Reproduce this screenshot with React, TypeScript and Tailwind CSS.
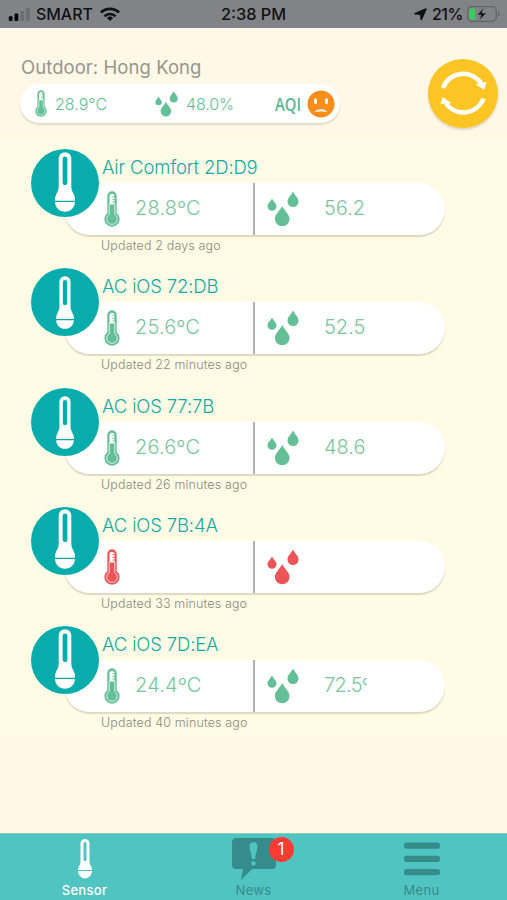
import React from 'react';

interface Sensor {
  name: string;
  temperature?: string;
  humidity?: string;
  updated: string;
  offline?: boolean;
  small?: boolean;
}

const sensors: Sensor[] = [
  { name: 'Air Comfort 2D:D9', temperature: '28.8ºC', humidity: '56.2', updated: 'Updated 2 days ago' },
  { name: 'AC iOS 72:DB', temperature: '25.6ºC', humidity: '52.5', updated: 'Updated 22 minutes ago', small: true },
  { name: 'AC iOS 77:7B', temperature: '26.6ºC', humidity: '48.6', updated: 'Updated 26 minutes ago', small: true },
  { name: 'AC iOS 7B:4A', updated: 'Updated 33 minutes ago', offline: true },
  { name: 'AC iOS 7D:EA', temperature: '24.4ºC', humidity: '72.5º', updated: 'Updated 40 minutes ago' },
];

function Thermometer({ className }: { className: string }) {
  return (
    <svg viewBox="0 0 16 36" className={className} fill="none">
      <path d="M3.3 5a4.7 4.7 0 0 1 9.4 0v17.2a7.600 7.600 0 1 1-9.400 0Z" fill="currentColor" />
      <path
        d="M5.200 13v10.600a5.300 5.300 0 1 0 5.600 0V13"
        stroke="white"
        strokeWidth="0.900"
        strokeOpacity="0.850"
      />
      <path d="M5.500 5.200a2.500 2.500 0 0 1 5 0V13.500h-5Z" fill="white" />
      <path d="M8.300 5.800h2.500M8.300 8.400h2.500M8.300 11h2.500" stroke="currentColor" strokeWidth="0.900" />
    </svg>
  );
}

function Drops({ className }: { className: string }) {
  return (
    <svg viewBox="0 0 32 36" className={className} fill="currentColor">
      <path d="M26 0.5c1.5 3.4 5.5 6.3 5.5 10a5.5 5.5 0 0 1-11 0c0-3.7 4-6.6 5.5-10Z" />
      <path d="M5 7.5c1.2 2.8 4.5 5 4.5 7.8a4.5 4.5 0 0 1-9 0c0-2.8 3.3-5 4.5-7.8Z" />
      <path d="M15.2 15c2 4.6 7.3 8.2 7.3 13a7.3 7.3 0 0 1-14.6 0c0-4.8 5.3-8.4 7.3-13Z" />
    </svg>
  );
}

function SensorIcon({ className }: { className: string }) {
  return (
    <svg viewBox="0 0 20 60" className={className}>
      <path
        d="M3.7 6.5a6.3 6.3 0 0 1 12.6 0v28.500c0 4 2.500 6.500 3.500 10.200.200 1 .200 2.400.200 3.600H0c0-1.200 0-2.600.200-3.600C1.200 41.500 3.700 39 3.700 35ZM0 50h20c-.2 5.600-4.500 9.800-10 9.800S.2 55.600 0 50Z"
        fill="white"
      />
      <path d="M7.600 6.800a2.400 2.400 0 0 1 4.800 0v24a2.400 2.400 0 0 1-4.800 0Z" className="fill-[#08adab]" />
    </svg>
  );
}

function StatusBar() {
  return (
    <header className="flex h-[28px] shrink-0 items-center bg-[#828387] pl-2 font-medium text-[#111]">
      <svg viewBox="0 0 23 14" className="h-[13px] w-[23px]">
        <rect x="0" y="9" width="4" height="5" rx="1" />
        <rect x="6.200" y="6" width="4" height="8" rx="1" />
        <rect x="12.500" y="3" width="4" height="11" rx="1" fill="#6d6e71" />
        <rect x="18.500" y="0" width="4" height="14" rx="1" fill="#6d6e71" />
      </svg>
      <span className="ml-[5px] w-[57px] text-[16px] tracking-[-0.050px] whitespace-nowrap">SMART</span>
      <svg viewBox="0 0 20 14" className="ml-[7px] h-[14px] w-[20px]" fill="none">
        <path d="M1 5.500a13 13 0 0 1 18 0" stroke="#111" strokeWidth="2.900" />
        <path d="M4.500 9.200a8 8 0 0 1 11 0" stroke="#111" strokeWidth="2.700" />
        <path d="M10 14 6.900 10.900a4.500 4.500 0 0 1 6.200 0Z" fill="#111" />
      </svg>
      <span className="ml-[101px] w-[66px] text-[16.300px] whitespace-nowrap">2:38 PM</span>
      <svg viewBox="0 0 13 13" className="mt-px ml-[127px] h-[13px] w-[13px]">
        <path d="M12 1 7.300 11.500 6.700 6.300 1 5.800Z" fill="#111" stroke="#111" strokeWidth="1.600" strokeLinejoin="round" />
      </svg>
      <span className="ml-[5px] w-[32px] text-[16px] tracking-[-0.500px] whitespace-nowrap">21%</span>
      <svg viewBox="0 0 33 16" className="ml-[3px] h-[16px] w-[33px]" fill="none">
        <rect x="0.700" y="0.700" width="28.600" height="14.600" rx="4" stroke="#626367" strokeWidth="1.200" />
        <path d="M4.500 2.500H8v11H4.500a2 2 0 0 1-2-2v-7a2 2 0 0 1 2-2Z" fill="#30d158" />
        <path d="M31 5.500v5c2-.7 2-4.300 0-5Z" fill="#626367" />
        <path d="m17 1.500-7 7.500h4l-2 5.500L19.500 7H15Z" fill="#111" stroke="#828387" strokeWidth="0.700" />
      </svg>
    </header>
  );
}

function Outdoor() {
  return (
    <section className="flex h-[111px] shrink-0 bg-[#fff8e6] pl-5">
      <div className="w-[320px] pt-[26px]">
        <h1 className="pl-px text-[18.500px] leading-[26px] tracking-[0.060px] whitespace-nowrap text-[#96958d]">
          Outdoor: Hong Kong
        </h1>
        <div className="mt-[4px] flex h-[39px] items-center rounded-full bg-white pl-[15px] text-[#62c095] shadow-[0_2px_2px_rgba(120,110,80,0.220)]">
          <Thermometer className="h-[27px] w-[12px]" />
          <span className="ml-[8px] w-[53px] text-[16px] font-light whitespace-nowrap">28.9°C</span>
          <Drops className="ml-[46px] h-[26px] w-[25px]" />
          <span className="ml-[7px] w-[49px] text-[16px] font-light tracking-[-0.100px] whitespace-nowrap">48.0%</span>
          <span className="ml-[40px] w-[27px] origin-left scale-x-[0.800] font-['Open_Sans',sans-serif] text-[18.500px] font-semibold text-[#54b795]">
            AQI
          </span>
          <svg viewBox="0 0 28 28" className="ml-[5px] h-[28px] w-[28px] shrink-0">
            <circle cx="14" cy="14" r="13.500" fill="#f88d1b" />
            <ellipse cx="8.500" cy="11.300" rx="1.500" ry="3" fill="white" />
            <ellipse cx="19.500" cy="11.300" rx="1.500" ry="3" fill="white" />
            <path d="M8.500 21.500c2.500-2.400 8.500-2.400 11 0-3-.8-8-.8-11 0Z" fill="white" stroke="white" strokeWidth="0.800" />
          </svg>
        </div>
      </div>
      <button className="mt-[31px] ml-[88px] h-[69px] w-[70px] rounded-full bg-[#fdc524] shadow-[0_2px_2px_rgba(120,110,80,0.250)]">
        <svg viewBox="0 0 70 69" className="h-[69px] w-[70px]" fill="none">
          <path d="M15 29a21.500 21.500 0 0 1 38.500-4M55.500 39.500a21.500 21.500 0 0 1-37.500 5" stroke="white" strokeWidth="4.600" />
          <path d="m47.500 25.500 11-2.700-2.300 8Z" fill="white" />
          <path d="m12.500 45 2.300-7 8.700 6.300Z" fill="white" />
        </svg>
      </button>
    </section>
  );
}

function SensorRow({ sensor }: { sensor: Sensor }) {
  const iconColor = sensor.offline ? 'text-[#ed5457]' : 'text-[#64bf96]';

  return (
    <li className="relative h-[119.250px] pl-[64px]">
      <h2 className="h-[34px] pt-[6px] pl-[38px] text-[18.500px] leading-[25px] font-light tracking-[-0.150px] whitespace-nowrap text-[#13aaa3]">
        {sensor.name}
      </h2>
      <div className="flex h-[52px] w-[381px] items-center rounded-full bg-white shadow-[0_2px_1px_rgba(125,115,80,0.250)]">
        <div className={`flex h-full w-[189px] items-center pl-[40px] ${iconColor}`}>
          <Thermometer className="h-[36px] w-[16px]" />
          <span className="mb-[2px] ml-[15px] text-[20px] font-light tracking-[0.200px] text-[#79c69e]">{sensor.temperature}</span>
        </div>
        <div className="h-full w-[2px] bg-[#b2b2b2]" />
        <div className={`flex h-full items-center pl-[12px] ${iconColor}`}>
          <Drops className="h-[36px] w-[32px]" />
          {/* fixed column, the unit runs past its edge */}
          <span
            className={`mb-[2px] ml-[25px] w-[43px] overflow-hidden text-[20px] font-light whitespace-nowrap text-[#79c69e] ${
              sensor.humidity?.endsWith('º') ? 'tracking-[-0.700px]' : ''
            }`}
          >
            {sensor.humidity}
          </span>
        </div>
      </div>
      <p className="pt-px pl-[37px] text-[12.500px] leading-[20px] font-light tracking-[0.150px] text-[#8b897b]">{sensor.updated}</p>
      <div className="absolute top-0 left-[31px] flex h-[68px] w-[68px] items-center justify-center rounded-full bg-[#08adab]">
        <SensorIcon className={sensor.small ? 'mt-px h-[53px] w-[18px]' : 'mb-[3px] h-[60px] w-[20px]'} />
      </div>
    </li>
  );
}

function TabBar() {
  return (
    <nav className="grid h-[67px] shrink-0 grid-cols-3 border-t border-[#8fcdbd] bg-[#50c4c1] text-[13px] text-[#368b8b]">
      <div className="flex flex-col items-center pt-[5px] text-white">
        <svg viewBox="0 0 14 40" className="h-[40px] w-[14px]">
          <path d="M2.500 4.500a4.500 4.500 0 0 1 9 0v18c0 3 2.500 5.500 2.500 8.500H0c0-3 2.500-5.500 2.500-8.500ZM0 32h14c-.3 4-3.300 7.500-7 7.500s-6.700-3.500-7-7.500Z" fill="white" />
          <path d="M5.500 4.500a1.500 1.500 0 0 1 3 0v16a1.500 1.500 0 0 1-3 0Z" fill="#50c4c1" />
        </svg>
        <span className="mt-[2px] font-medium tracking-[0.300px]">Sensor</span>
      </div>
      <div className="flex flex-col items-center pt-[4px]">
        <div className="relative h-[42px] w-[44px]">
          <svg viewBox="0 0 44 42" className="h-[42px] w-[44px]">
            <path d="M4 0h36a4 4 0 0 1 4 4v23a4 4 0 0 1-4 4H20L9 42l2-11H4a4 4 0 0 1-4-4V4a4 4 0 0 1 4-4Z" fill="#368b8b" />
            <path d="M17.500 8c0-5 8-5 8 0 0 4-2 8-2.500 13h-3C19.500 16 17.500 12 17.500 8Z" fill="#50c4c1" />
            <circle cx="21.500" cy="25.500" r="2.300" fill="#50c4c1" />
          </svg>
          <span className="absolute -top-px left-[37px] flex h-[25px] w-[25px] items-center justify-center rounded-full bg-[#fd3b32] text-[17px] text-white">
            1
          </span>
        </div>
        <span className="mt-px tracking-[0.300px]">News</span>
      </div>
      <div className="flex flex-col items-center pt-[8px] pr-[2px]">
        <svg viewBox="0 0 36 34" className="h-[34px] w-[36px]" fill="currentColor">
          <rect x="0" y="0.500" width="36" height="6.200" rx="2.500" />
          <rect x="0" y="13.700" width="36" height="6.200" rx="2.500" />
          <rect x="0" y="27" width="36" height="6.200" rx="2.500" />
        </svg>
        <span className="mt-[5px] tracking-[0.300px]">Menu</span>
      </div>
    </nav>
  );
}

function App() {
  return (
    <div className="flex h-[900px] w-[507px] flex-col overflow-hidden bg-[#fff8e6] font-['Inter',sans-serif]">
      <StatusBar />
      <Outdoor />
      <main className="flex-1">
        <ul className="h-[598px] bg-[#fffbe5] pt-[10px]">
          {sensors.map((sensor) => (
            <SensorRow key={sensor.name} sensor={sensor} />
          ))}
        </ul>
      </main>
      <TabBar />
    </div>
  );
}

export default App;
